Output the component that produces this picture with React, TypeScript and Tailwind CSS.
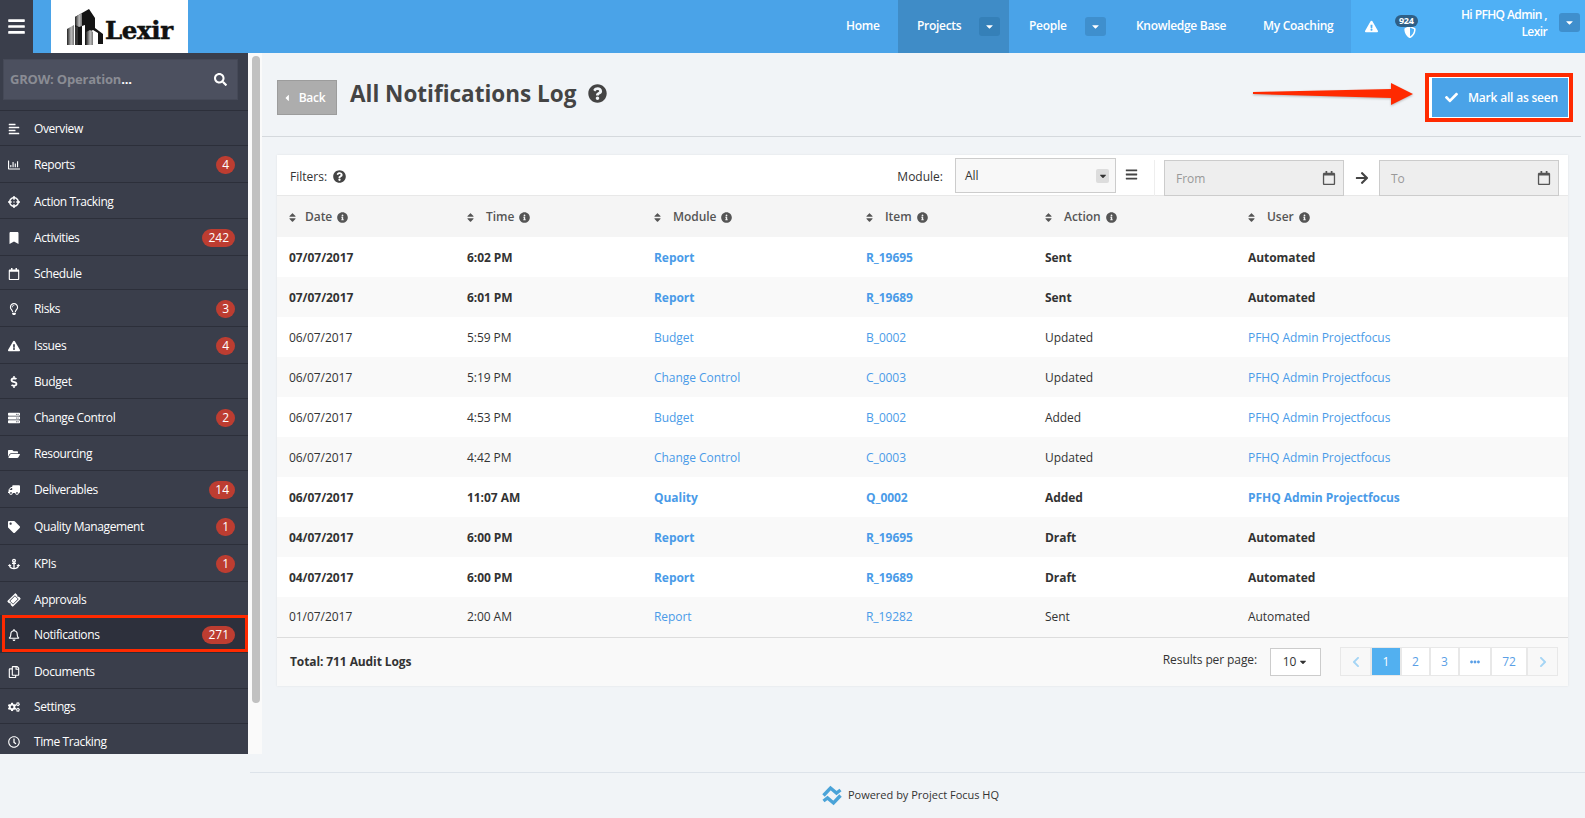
import {
  FaAlignLeft, FaAnchor, FaArrowRight, FaBars, FaBookmark, FaCaretDown, FaCaretLeft, FaCheck, FaChevronLeft, FaChevronRight,
  FaCogs, FaCrosshairs, FaDollarSign, FaEllipsisH, FaExclamationTriangle, FaFolderOpen, FaInfoCircle, FaQuestionCircle,
  FaRegBell, FaRegCalendar, FaRegChartBar, FaRegClock, FaRegCopy, FaRegLightbulb, FaSearch, FaServer,
  FaShieldAlt, FaSort, FaTag, FaTicketAlt, FaTruck,
} from "react-icons/fa";

const font = "font-['Open_Sans',sans-serif]";

const menu = [
  { name: "Overview", icon: <FaAlignLeft />, h: "h-[35px]" },
  { name: "Reports", icon: <FaRegChartBar />, h: "h-[37px]", badge: "4" },
  { name: "Action Tracking", icon: <FaCrosshairs />, h: "h-[36px]" },
  { name: "Activities", icon: <FaBookmark />, h: "h-[37px]", badge: "242" },
  { name: "Schedule", icon: <FaRegCalendar />, h: "h-[34px]" },
  { name: "Risks", icon: <FaRegLightbulb />, h: "h-[37px]", badge: "3" },
  { name: "Issues", icon: <FaExclamationTriangle />, h: "h-[37px]", badge: "4" },
  { name: "Budget", icon: <FaDollarSign />, h: "h-[35px]" },
  { name: "Change Control", icon: <FaServer />, h: "h-[37px]", badge: "2" },
  { name: "Resourcing", icon: <FaFolderOpen />, h: "h-[35px]" },
  { name: "Deliverables", icon: <FaTruck className="-scale-x-100" />, h: "h-[37px]", badge: "14" },
  { name: "Quality Management", icon: <FaTag />, h: "h-[37px]", badge: "1" },
  { name: "KPIs", icon: <FaAnchor />, h: "h-[37px]", badge: "1" },
  { name: "Approvals", icon: <FaTicketAlt className="-rotate-45" />, h: "h-[34px]" },
  { name: "Notifications", icon: <FaRegBell />, h: "h-[37px]", badge: "271", active: true },
  { name: "Documents", icon: <FaRegCopy />, h: "h-[36px]" },
  { name: "Settings", icon: <FaCogs />, h: "h-[35px]" },
  { name: "Time Tracking", icon: <FaRegClock />, h: "h-[35px]" },
];

const rows = [
  ["07/07/2017", "6:02 PM", "Report", "R_19695", "Sent", "Automated", true],
  ["07/07/2017", "6:01 PM", "Report", "R_19689", "Sent", "Automated", true],
  ["06/07/2017", "5:59 PM", "Budget", "B_0002", "Updated", "PFHQ Admin Projectfocus", false],
  ["06/07/2017", "5:19 PM", "Change Control", "C_0003", "Updated", "PFHQ Admin Projectfocus", false],
  ["06/07/2017", "4:53 PM", "Budget", "B_0002", "Added", "PFHQ Admin Projectfocus", false],
  ["06/07/2017", "4:42 PM", "Change Control", "C_0003", "Updated", "PFHQ Admin Projectfocus", false],
  ["06/07/2017", "11:07 AM", "Quality", "Q_0002", "Added", "PFHQ Admin Projectfocus", true],
  ["04/07/2017", "6:00 PM", "Report", "R_19695", "Draft", "Automated", true],
  ["04/07/2017", "6:00 PM", "Report", "R_19689", "Draft", "Automated", true],
  ["01/07/2017", "2:00 AM", "Report", "R_19282", "Sent", "Automated", false],
] as const;

const columns = [
  { name: "Date", w: "w-[178px]", gap: "ml-[7px]" },
  { name: "Time", w: "w-[187px]", gap: "ml-[10px]" },
  { name: "Module", w: "w-[212px]", gap: "ml-[10px]" },
  { name: "Item", w: "w-[179px]", gap: "ml-[10px]" },
  { name: "Action", w: "w-[203px]", gap: "ml-[10px]" },
  { name: "User", w: "", gap: "ml-[10px]" },
];

const Caret = ({ dark }: { dark?: boolean }) => (
  <span className={`flex h-[19px] w-[21px] items-center justify-center rounded-[3px] text-[11px] text-white ${dark ? "bg-[#3580b8]" : "bg-[#3f8fcd]"}`}>
    <FaCaretDown />
  </span>
);

const Logo = () => (
  <div className="ml-[18px] flex h-[53px] w-[137px] items-center bg-white pl-[15px]">
    <svg width="40" height="38" viewBox="0 0 40 38">
      <defs>
        <linearGradient id="face" x1="0" x2="1" y1="0" y2="0">
          <stop offset="0" stopColor="#222" />
          <stop offset="0.6" stopColor="#bbb" />
          <stop offset="1" stopColor="#777" />
        </linearGradient>
      </defs>
      <path d="M1 37V21l7-4v20z" fill="url(#face)" />
      <path d="M9 37V9l14-8 6 9v10l8 6v10h-5V25l-5-3-4 2v13h-4V17l-3 1v19z" fill="#141414" />
      <path d="M9 17V9l7-4v13l-3 1z" fill="url(#face)" />
      <path d="M20 37V24l4-2 3 2v13z" fill="url(#face)" />
      <path d="M9 37V19l3-1v19z" fill="#333" />
    </svg>
    <span className="-ml-[1px] mt-[10px] font-['DejaVu_Serif',serif] text-[24.5px] font-bold leading-none tracking-[-0.4px] text-[#111] [-webkit-text-stroke:0.5px_#111]">Lexir</span>
  </div>
);

const Header = () => (
  <header className="flex h-[53px] bg-[#4aa3e8] text-[12px] font-semibold tracking-[-0.3px] text-white">
    <div className="flex w-[33px] items-center justify-center bg-[#3a3e4b] text-[19px]">
      <FaBars />
    </div>
    <Logo />
    <nav className="ml-auto flex h-full">
      <a className="flex w-[71px] items-center pb-[1px] pl-[19px]">Home</a>
      <a className="flex w-[111px] items-center justify-between bg-[#3f8cc7] pb-[1px] pl-[19px] pr-[9px]">Projects <Caret dark /></a>
      <a className="flex w-[127px] items-center justify-between pb-[1px] pl-[20px] pr-[30px]">People <Caret /></a>
      <a className="flex w-[127px] items-center pb-[1px]">Knowledge Base</a>
      <a className="flex w-[88px] items-center pb-[1px]">My Coaching</a>
    </nav>
    <div className="flex w-[234px] items-center bg-[#4fb0f5]">
      <FaExclamationTriangle className="ml-[14px] text-[13px]" />
      <div className="relative ml-[26px] mt-[10px] text-[12px]">
        <FaShieldAlt />
        <span className="absolute -left-[9px] -top-[11px] rounded-full bg-[#2f5f86] px-[4px] text-[9px] font-bold leading-[12px]">924</span>
      </div>
      <div className="mb-[7px] ml-[32px] w-[99px] text-right text-[12px] leading-[17px] tracking-[-0.6px]">Hi PFHQ Admin ,<br />Lexir</div>
      <div className="mb-[8px] ml-[12px]"><Caret /></div>
    </div>
  </header>
);

const Sidebar = () => (
  <aside className="h-[701px] w-[248px] shrink-0 overflow-hidden bg-[#3a3e4b] text-[12px] text-white">
    <div className="h-[58px] border-b border-[#2c2f3a] pl-[3px] pr-[10px] pt-[6px]">
      <div className="flex h-[41px] items-center justify-between border border-[#454957] bg-[#4c505f] pl-[6px] pr-[10px]">
        <span className="text-[13px] font-bold tracking-[-0.2px] text-[#8a8c94]">GROW: Operation<span className="text-white">...</span></span>
        <FaSearch className="text-[13px]" />
      </div>
    </div>
    {menu.map((m) => (
      <div key={m.name} className={`relative flex items-center border-b border-[#2c2f3a] pr-[13px] pt-[2px] ${m.h} ${m.active ? "bg-[#2d303c]" : ""}`}>
        <span className="flex w-[28px] justify-center text-[12px]">{m.icon}</span>
        <span className="ml-[6px] flex-1 tracking-[-0.4px]">{m.name}</span>
        {m.badge && (
          <span className="flex h-[18px] min-w-[18px] items-center justify-center rounded-full bg-[#bd3d31] px-[6px] text-[12px] font-medium">{m.badge}</span>
        )}
        {m.active && <span className="pointer-events-none absolute -top-[1px] bottom-0 left-[2px] right-0 border-[3px] border-[#ff2a00]" />}
      </div>
    ))}
  </aside>
);

const Arrow = () => (
  <svg width="161" height="24" viewBox="0 0 161 24" className="mr-[11px] mt-[9px] drop-shadow-[0_1px_1px_rgba(0,0,0,0.25)]">
    <path d="M0 10 L138 7 L138 1 L160 12 L138 23 L138 16 L0 12z" fill="#ff2a00" />
  </svg>
);

const Toolbar = () => (
  <div className="flex h-[84px] items-start border-b border-[#d5d9dd] pl-[15px]">
    <button className="mt-[27px] flex h-[35px] w-[60px] items-center justify-center gap-[7px] border border-[#9c9c9c] bg-[#adadad] pr-[7px] text-[12px] font-semibold tracking-[-0.3px] text-white">
      <FaCaretLeft className="text-[10px]" /> Back
    </button>
    <h1 className="ml-[13px] mt-[24px] text-[22.5px] font-bold leading-[33px] text-[#444]">All Notifications Log</h1>
    <FaQuestionCircle className="ml-[12px] mt-[31px] text-[19px] text-[#444]" />
    <div className="ml-auto mr-[8px] mt-[20px] flex items-start">
      <Arrow />
      <div className="border-[4px] border-[#ff2a00] bg-white py-[1px] pl-[3px] pr-[1px]">
        <button className="flex h-[39px] w-[136px] items-center gap-[10px] bg-[#4aa3e8] pl-[13px] text-[12px] font-semibold tracking-[-0.2px] text-white">
          <FaCheck className="text-[13px]" /> Mark all as seen
        </button>
      </div>
    </div>
  </div>
);

const Filters = () => (
  <div className="flex h-[41px] items-start border-b border-[#e8e8e8] text-[12px] text-[#333]">
    <span className="ml-[13px] mt-[13px] font-medium">Filters:</span>
    <FaQuestionCircle className="ml-[6px] mt-[15px] text-[13px] text-[#444]" />
    <span className="ml-auto mt-[13px] font-medium">Module:</span>
    <div className="ml-[12px] mt-[3px] flex h-[35px] w-[161px] items-center justify-between border border-[#ccc] bg-[#f8f8f8] pl-[9px] pr-[6px]">
      <span className="pt-[1px]">All</span>
      <span className="flex h-[14px] w-[13px] items-center justify-center rounded-[2px] bg-[#ddd] text-[10px]"><FaCaretDown /></span>
    </div>
    <FaBars className="ml-[9px] mt-[13px] text-[13px] text-[#444]" />
    <div className="ml-[16px] mt-[5px] flex h-[36px] items-start border-l border-[#eee] pl-[9px]">
      <div className="flex h-[36px] w-[180px] items-center justify-between border border-[#ccc] bg-[#eee] pl-[11px] pr-[7px] text-[#999]">
        <span className="pt-[1px]">From</span> <FaRegCalendar className="text-[14px] text-[#555]" />
      </div>
      <FaArrowRight className="ml-[11px] mr-[10px] mt-[11px] text-[14px] text-[#444]" />
      <div className="flex h-[36px] w-[180px] items-center justify-between border border-[#ccc] bg-[#eee] pl-[11px] pr-[7px] text-[#999]">
        <span className="pt-[1px]">To</span> <FaRegCalendar className="text-[14px] text-[#555]" />
      </div>
    </div>
    <div className="w-[9px]" />
  </div>
);

const LogTable = () => (
  <table className="w-full table-fixed border-b border-[#ddd] text-[12px] tracking-[-0.05px]">
    <thead>
      <tr className="h-[41px] bg-[#f5f5f5] text-left text-[#555]">
        {columns.map((c) => (
          <th key={c.name} className={`pl-[12px] pt-[1px] font-semibold ${c.w}`}>
            <span className="flex items-center">
              <FaSort className="-ml-[2px] text-[11px]" />
              <span className={c.gap}>{c.name}</span>
              <FaInfoCircle className="ml-[5px] text-[11px]" />
            </span>
          </th>
        ))}
      </tr>
    </thead>
    <tbody>
      {rows.map((r, i) => {
        const weight = r[6] ? "font-bold" : "font-normal";
        return (
          <tr key={i} className={`h-[40px] ${i % 2 ? "bg-[#f9f9f9]" : "bg-white"} ${weight}`}>
            <td className="pl-[12px] pt-[1px] text-[#333]">{r[0]}</td>
            <td className="pl-[12px] pt-[1px] text-[#333]">{r[1]}</td>
            <td className="pl-[12px] pt-[1px] text-[#4a9be8]">{r[2]}</td>
            <td className="pl-[12px] pt-[1px] text-[#4a9be8]">{r[3]}</td>
            <td className="pl-[12px] pt-[1px] text-[#333]">{r[4]}</td>
            <td className={`pl-[12px] pt-[1px] ${r[5] === "Automated" ? "text-[#333]" : "text-[#4a9be8]"}`}>{r[5]}</td>
          </tr>
        );
      })}
    </tbody>
  </table>
);

const Pager = () => {
  const cell = "flex h-[29px] items-center justify-center border border-[#e8e8e8]";
  return (
    <div className="ml-[19px] flex text-[12px] text-[#5a9fe6]">
      <span className={`${cell} w-[31px] bg-[#f8f8f8] text-[12px] text-[#a5d5f5]`}><FaChevronLeft /></span>
      <span className={`${cell} w-[30px] border-[#52b0f0] bg-[#52b0f0] text-white`}>1</span>
      <span className={`${cell} w-[29px] bg-white`}>2</span>
      <span className={`${cell} w-[29px] bg-white`}>3</span>
      <span className={`${cell} w-[32px] bg-white text-[10px]`}><FaEllipsisH /></span>
      <span className={`${cell} w-[36px] bg-white`}>72</span>
      <span className={`${cell} w-[31px] bg-[#f8f8f8] text-[12px] text-[#a5d5f5]`}><FaChevronRight /></span>
    </div>
  );
};

const PageFooter = () => (
  <div className="flex h-[48px] items-center bg-[#f9f9f9] pl-[13px] pr-[10px] text-[12px] text-[#333]">
    <b className="font-bold tracking-[-0.1px]">Total: 711 Audit Logs</b>
    <span className="mb-[3px] ml-auto tracking-[-0.1px]">Results per page:</span>
    <span className="ml-[13px] flex h-[28px] w-[51px] items-center justify-center gap-[2px] border border-[#ccc] bg-white">
      10 <FaCaretDown className="text-[10px]" />
    </span>
    <Pager />
  </div>
);

const Footer = () => (
  <footer className="ml-[250px] mt-[18px] flex h-[46px] items-center justify-center border-t border-[#dde3ea] pr-[16px] text-[11px] text-[#333]">
    <svg width="24" height="23" viewBox="0 0 23 23" className="mr-[4px]" fill="none" stroke="#4aa3d8" strokeWidth="3.4">
      <path d="M3 11.5 L10 4 L16 9 L20 6" />
      <path d="M20 11.5 L13 19 L7 14 L3 17" />
    </svg>
    Powered by Project Focus HQ
  </footer>
);

export default function App() {
  return (
    <div className={`h-[818px] w-[1585px] overflow-hidden bg-[#f1f4f7] ${font}`}>
      <Header />
      <div className="flex">
        <Sidebar />
        <div className="h-[701px] w-[14px] shrink-0 bg-[#fafafa] pl-[4px] pt-[3px]">
          <div className="h-[647px] w-[8px] rounded-[4px] bg-[#c1c1c1]" />
        </div>
        <main className="flex-1 pr-[4px]">
          <Toolbar />
          <div className="ml-[15px] mr-[13px] mt-[18px] bg-white shadow-[0_0_2px_rgba(0,0,0,0.08)]">
            <Filters />
            <LogTable />
            <PageFooter />
          </div>
        </main>
      </div>
      <Footer />
    </div>
  );
}
